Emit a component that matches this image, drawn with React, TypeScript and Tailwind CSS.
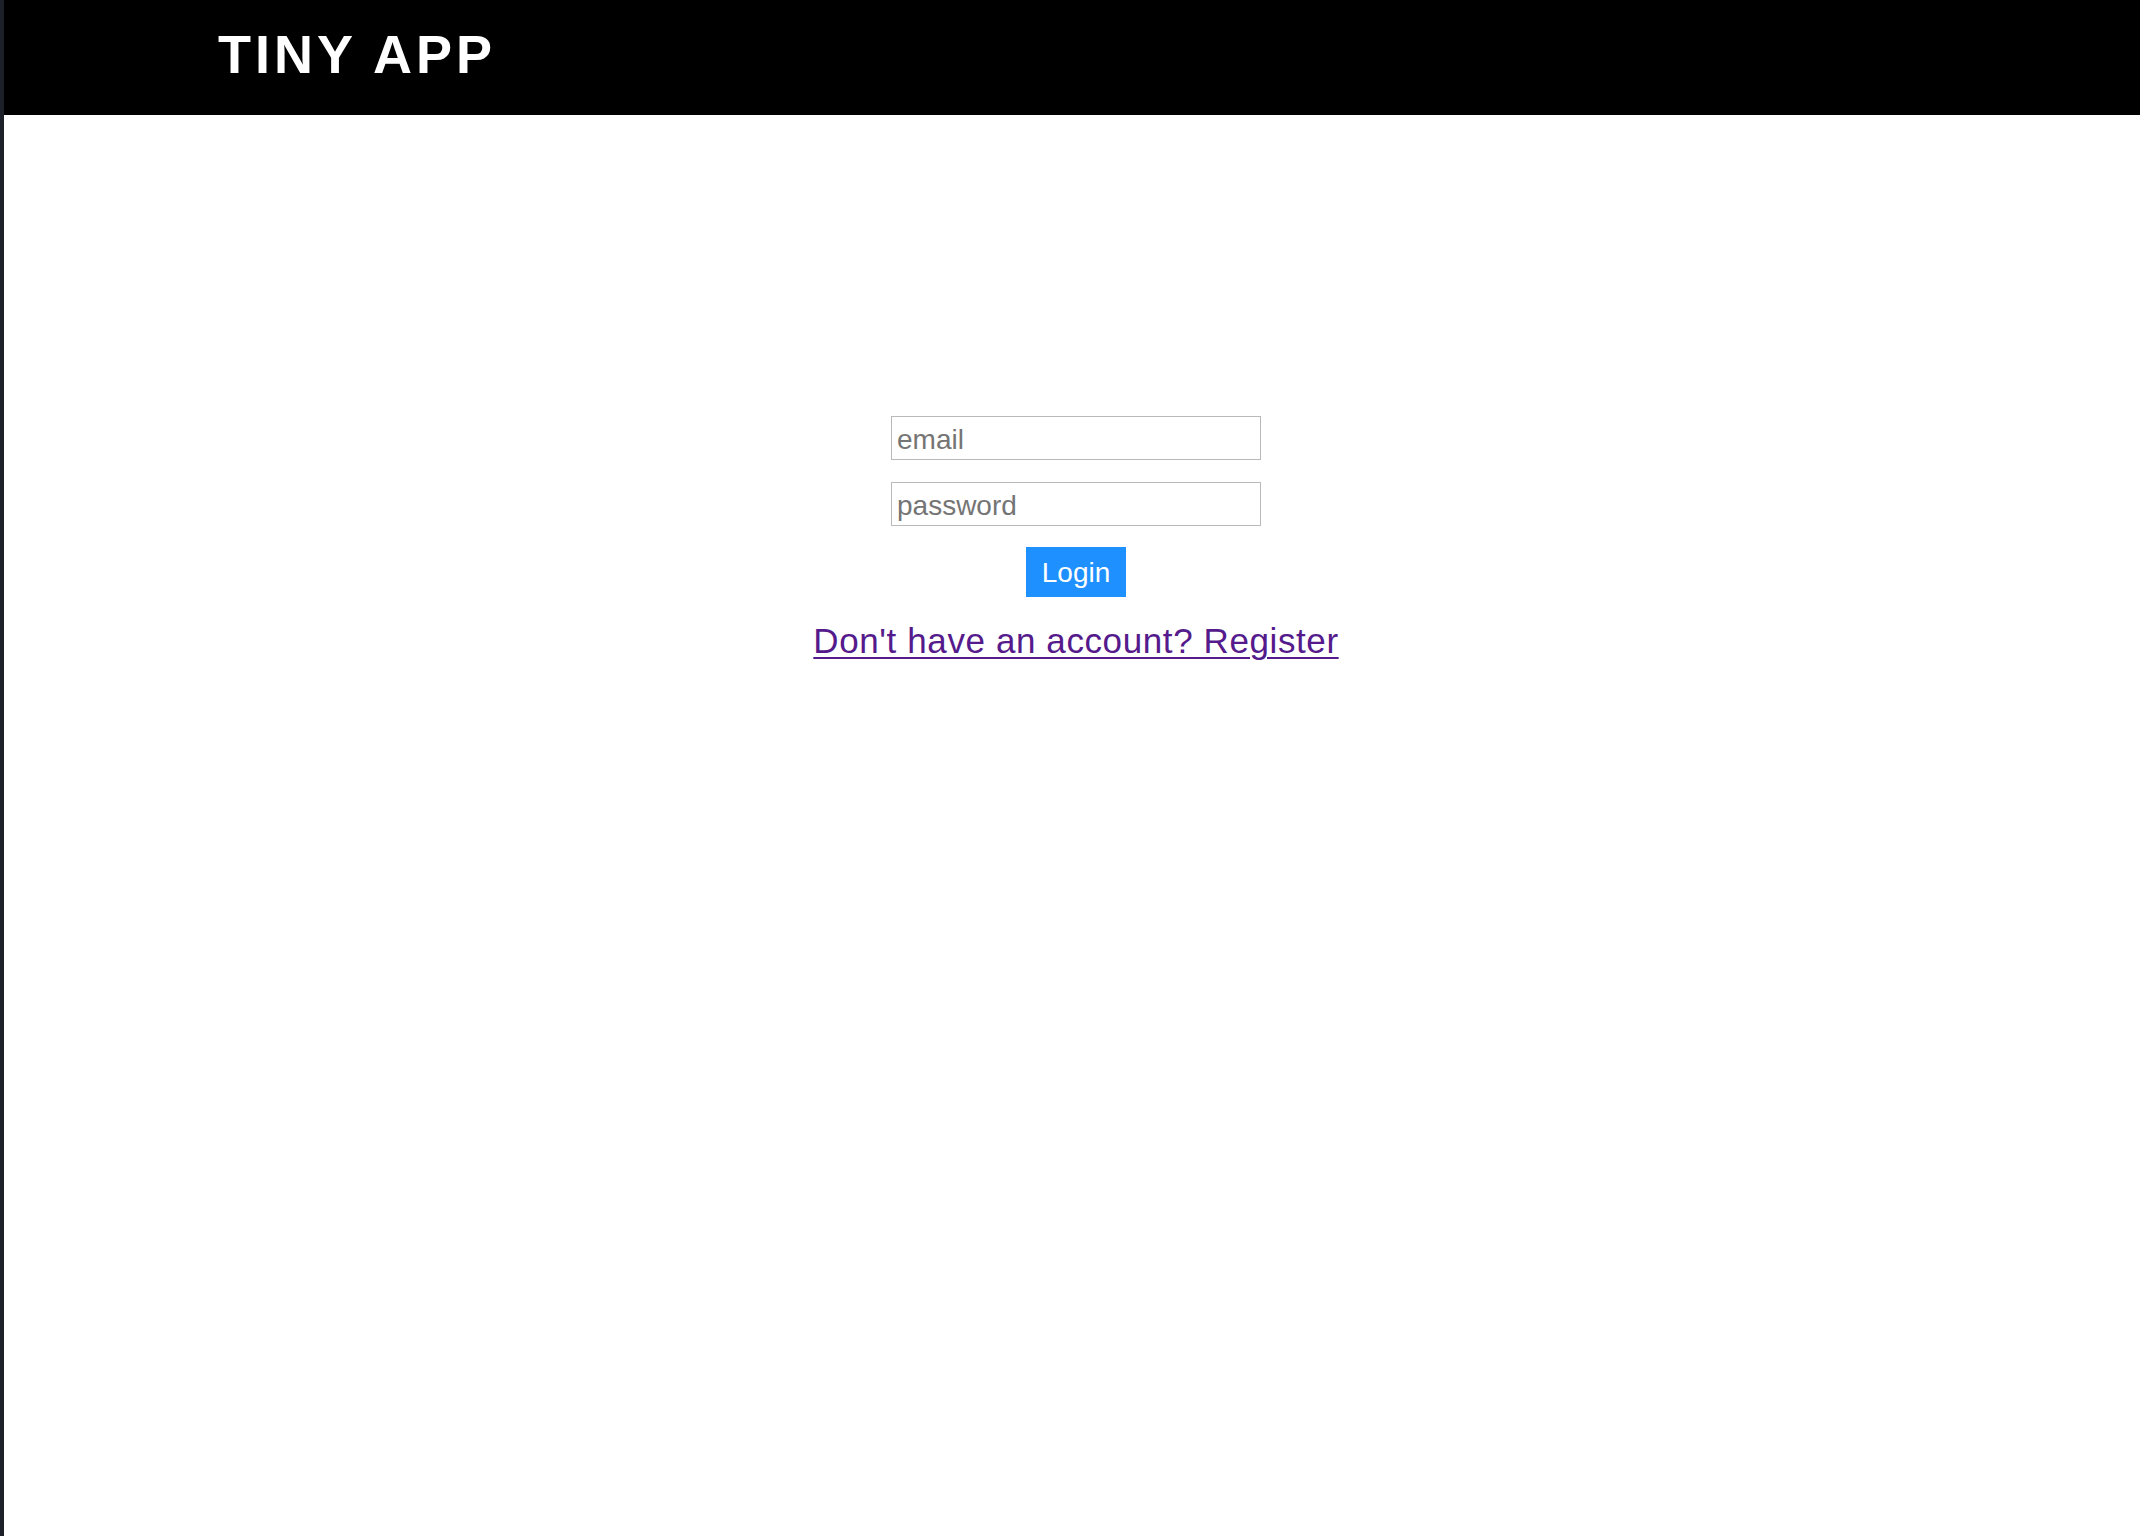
// Login page: black header with wordmark, centered email/password form.
export default function App() {
  return (
    <div className="flex min-h-[1536px] w-full bg-white font-['Liberation_Sans',Arial,sans-serif]">
      {/* editor strip at the very left of the capture */}
      <div className="w-[4px] shrink-0 bg-[#1c2028]" />

      <div className="flex min-w-0 flex-1 flex-col">
        <header className="h-[115px] bg-black pl-[214px] pt-[27px]">
          <h1 className="text-[54px] font-bold leading-none tracking-[4px] text-white">TINY APP</h1>
        </header>

        <main className="flex flex-col items-center pl-[8px] pt-[301px]">
          <form className="flex flex-col items-center" onSubmit={(e) => e.preventDefault()}>
            <input
              type="email"
              placeholder="email"
              className="h-[44px] w-[370px] border border-[#b9b9b9] bg-white px-[5px] pt-[3px] text-[28px] text-black outline-none placeholder:text-[#757575]"
            />
            <input
              type="password"
              placeholder="password"
              className="mt-[22px] h-[44px] w-[370px] border border-[#b9b9b9] bg-white px-[5px] pt-[3px] text-[28px] text-black outline-none placeholder:text-[#757575]"
            />
            <button
              type="submit"
              className="mt-[21px] h-[50px] w-[100px] bg-[#1e90ff] pt-[2px] text-[28px] leading-none text-white"
            >
              Login
            </button>
          </form>

          <a
            href="#register"
            className="mt-[26px] text-[35px] leading-none tracking-[0.6px] text-[#551a8b] underline decoration-2 underline-offset-[4px]"
          >
            Don't have an account? Register
          </a>
        </main>
      </div>
    </div>
  );
}
